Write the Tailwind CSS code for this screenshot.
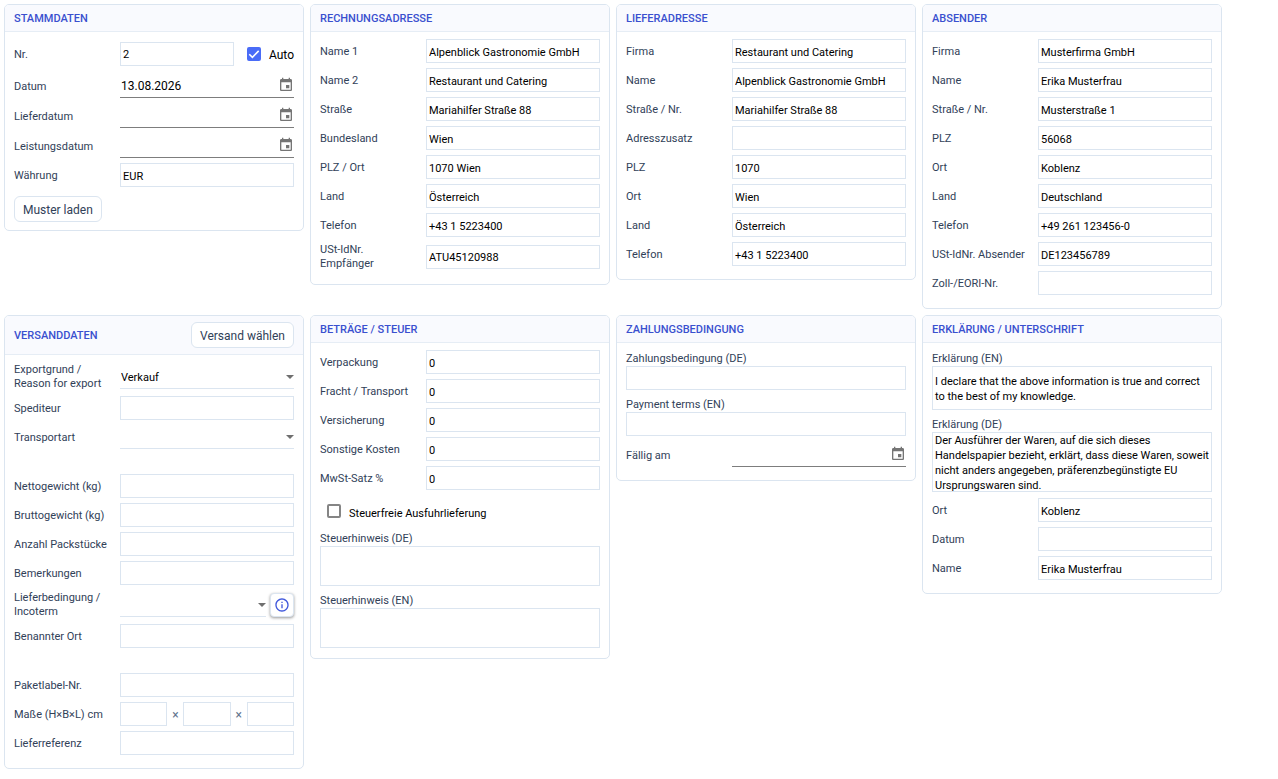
<!DOCTYPE html>
<html lang="de">
<head>
<meta charset="utf-8">
<meta name="viewport" content="width=device-width, initial-scale=1">
<title>Stammdaten</title>
<script src="https://cdn.jsdelivr.net/npm/@tailwindcss/browser@4"></script>
</head>
<body class="bg-white font-['Roboto','Noto_Sans',sans-serif] text-[11px] leading-[14px] text-slate-700">
<svg class="hidden" aria-hidden="true">
  <symbol id="event" viewBox="0 0 24 24"><path d="M17 12h-5v5h5v-5zM16 1v2H8V1H6v2H5c-1.11 0-1.99.9-1.99 2L3 19c0 1.1.89 2 2 2h14c1.1 0 2-.9 2-2V5c0-1.1-.9-2-2-2h-1V1h-2zm3 18H5V8h14v11z"/></symbol>
  <symbol id="arrow" viewBox="0 0 8 4"><path d="M0 0h8L4 4z"/></symbol>
</svg>
<main class="grid grid-cols-[repeat(auto-fill,300px)] items-start gap-[6px] p-1 [&_input]:pt-[2px] [&_label]:pt-[2px] [&_select]:pt-[3px]">

  <section class="rounded-[5px] border border-[#dbe5f0]">
    <h2 class="rounded-t-[4px] border-b border-[#e6edf5] bg-[#f9fafe] px-[9px] pt-[7px] pb-[5px] font-medium text-[#3a50cf]">STAMMDATEN</h2>
    <div class="px-[9px] pt-[7px] pb-2">
      <div class="mb-[5px] grid min-h-[29px] grid-cols-[98px_1fr] items-center gap-2">
        <label for="nr">Nr.</label>
        <div class="flex items-center gap-[13px]">
          <input id="nr" type="text" value="2" class="h-6 w-full min-w-0 flex-1 border border-[#dbe5f0] px-[2px] text-black">
          <div class="flex items-center gap-2">
            <span class="relative flex">
              <input id="auto" type="checkbox" checked class="peer size-[14px] appearance-none rounded-[2px] border-2 border-[#757575] checked:border-[#4a6cf7] checked:bg-[#4a6cf7]">
              <svg class="pointer-events-none absolute inset-0 hidden size-[14px] fill-none stroke-white stroke-[1.6] peer-checked:block" viewBox="0 0 14 14"><path d="M2.3 7.2l3.1 3.1 6.3-6.4"/></svg>
            </span>
            <label for="auto" class="text-[12px] text-black">Auto</label>
          </div>
        </div>
      </div>
      <div class="mb-[5px] grid min-h-[25px] grid-cols-[98px_1fr] items-center gap-2">
        <label for="datum">Datum</label>
        <div class="flex h-[25px] items-center border-b border-[#7d7d7d]">
          <input id="datum" type="text" value="13.08.2026" class="h-6 w-full min-w-0 flex-1 px-px text-[12px] text-black">
          <button type="button" aria-label="Datum auswählen"><svg class="size-4 fill-[#757575]"><use href="#event"/></svg></button>
        </div>
      </div>
      <div class="mb-[5px] grid min-h-[25px] grid-cols-[98px_1fr] items-center gap-2">
        <label for="lieferdatum">Lieferdatum</label>
        <div class="flex h-[25px] items-center border-b border-[#7d7d7d]">
          <input id="lieferdatum" type="text" class="h-6 w-full min-w-0 flex-1 px-px text-[12px] text-black">
          <button type="button" aria-label="Lieferdatum auswählen"><svg class="size-4 fill-[#757575]"><use href="#event"/></svg></button>
        </div>
      </div>
      <div class="mb-[5px] grid min-h-[25px] grid-cols-[98px_1fr] items-center gap-2">
        <label for="leistungsdatum">Leistungsdatum</label>
        <div class="flex h-[25px] items-center border-b border-[#7d7d7d]">
          <input id="leistungsdatum" type="text" class="h-6 w-full min-w-0 flex-1 px-px text-[12px] text-black">
          <button type="button" aria-label="Leistungsdatum auswählen"><svg class="size-4 fill-[#757575]"><use href="#event"/></svg></button>
        </div>
      </div>
      <div class="mb-[9px] grid min-h-6 grid-cols-[98px_1fr] items-center gap-2">
        <label for="waehrung">Währung</label>
        <input id="waehrung" type="text" value="EUR" class="h-6 w-full border border-[#dbe5f0] px-[2px] text-black">
      </div>
      <button type="button" class="block h-[26px] rounded-[6px] border border-[#dbe5f0] bg-white px-2 pt-[2px] text-[12px]">Muster laden</button>
    </div>
  </section>

  <section class="rounded-[5px] border border-[#dbe5f0]">
    <h2 class="rounded-t-[4px] border-b border-[#e6edf5] bg-[#f9fafe] px-[9px] pt-[7px] pb-[5px] font-medium text-[#3a50cf]">RECHNUNGSADRESSE</h2>
    <div class="px-[9px] pt-[7px] pb-2">
      <div class="mb-[5px] grid min-h-6 grid-cols-[98px_1fr] items-center gap-2"><label for="r1">Name 1</label><input id="r1" type="text" value="Alpenblick Gastronomie GmbH" class="h-6 w-full border border-[#dbe5f0] px-[2px] text-black"></div>
      <div class="mb-[5px] grid min-h-6 grid-cols-[98px_1fr] items-center gap-2"><label for="r2">Name 2</label><input id="r2" type="text" value="Restaurant und Catering" class="h-6 w-full border border-[#dbe5f0] px-[2px] text-black"></div>
      <div class="mb-[5px] grid min-h-6 grid-cols-[98px_1fr] items-center gap-2"><label for="r3">Straße</label><input id="r3" type="text" value="Mariahilfer Straße 88" class="h-6 w-full border border-[#dbe5f0] px-[2px] text-black"></div>
      <div class="mb-[5px] grid min-h-6 grid-cols-[98px_1fr] items-center gap-2"><label for="r4">Bundesland</label><input id="r4" type="text" value="Wien" class="h-6 w-full border border-[#dbe5f0] px-[2px] text-black"></div>
      <div class="mb-[5px] grid min-h-6 grid-cols-[98px_1fr] items-center gap-2"><label for="r5">PLZ / Ort</label><input id="r5" type="text" value="1070 Wien" class="h-6 w-full border border-[#dbe5f0] px-[2px] text-black"></div>
      <div class="mb-[5px] grid min-h-6 grid-cols-[98px_1fr] items-center gap-2"><label for="r6">Land</label><input id="r6" type="text" value="Österreich" class="h-6 w-full border border-[#dbe5f0] px-[2px] text-black"></div>
      <div class="mb-[5px] grid min-h-6 grid-cols-[98px_1fr] items-center gap-2"><label for="r7">Telefon</label><input id="r7" type="text" value="+43 1 5223400" class="h-6 w-full border border-[#dbe5f0] px-[2px] text-black"></div>
      <div class="mb-[5px] grid min-h-[29px] grid-cols-[98px_1fr] items-center gap-2"><label for="r8" class="pt-px!">USt-IdNr.<br>Empfänger</label><input id="r8" type="text" value="ATU45120988" class="h-6 w-full border border-[#dbe5f0] px-[2px] text-black"></div>
    </div>
  </section>

  <section class="rounded-[5px] border border-[#dbe5f0]">
    <h2 class="rounded-t-[4px] border-b border-[#e6edf5] bg-[#f9fafe] px-[9px] pt-[7px] pb-[5px] font-medium text-[#3a50cf]">LIEFERADRESSE</h2>
    <div class="px-[9px] pt-[7px] pb-2">
      <div class="mb-[5px] grid min-h-6 grid-cols-[98px_1fr] items-center gap-2"><label for="l1">Firma</label><input id="l1" type="text" value="Restaurant und Catering" class="h-6 w-full border border-[#dbe5f0] px-[2px] text-black"></div>
      <div class="mb-[5px] grid min-h-6 grid-cols-[98px_1fr] items-center gap-2"><label for="l2">Name</label><input id="l2" type="text" value="Alpenblick Gastronomie GmbH" class="h-6 w-full border border-[#dbe5f0] px-[2px] text-black"></div>
      <div class="mb-[5px] grid min-h-6 grid-cols-[98px_1fr] items-center gap-2"><label for="l3">Straße / Nr.</label><input id="l3" type="text" value="Mariahilfer Straße 88" class="h-6 w-full border border-[#dbe5f0] px-[2px] text-black"></div>
      <div class="mb-[5px] grid min-h-6 grid-cols-[98px_1fr] items-center gap-2"><label for="l4">Adresszusatz</label><input id="l4" type="text" class="h-6 w-full border border-[#dbe5f0] px-[2px] text-black"></div>
      <div class="mb-[5px] grid min-h-6 grid-cols-[98px_1fr] items-center gap-2"><label for="l5">PLZ</label><input id="l5" type="text" value="1070" class="h-6 w-full border border-[#dbe5f0] px-[2px] text-black"></div>
      <div class="mb-[5px] grid min-h-6 grid-cols-[98px_1fr] items-center gap-2"><label for="l6">Ort</label><input id="l6" type="text" value="Wien" class="h-6 w-full border border-[#dbe5f0] px-[2px] text-black"></div>
      <div class="mb-[5px] grid min-h-6 grid-cols-[98px_1fr] items-center gap-2"><label for="l7">Land</label><input id="l7" type="text" value="Österreich" class="h-6 w-full border border-[#dbe5f0] px-[2px] text-black"></div>
      <div class="mb-[5px] grid min-h-6 grid-cols-[98px_1fr] items-center gap-2"><label for="l8">Telefon</label><input id="l8" type="text" value="+43 1 5223400" class="h-6 w-full border border-[#dbe5f0] px-[2px] text-black"></div>
    </div>
  </section>

  <section class="rounded-[5px] border border-[#dbe5f0]">
    <h2 class="rounded-t-[4px] border-b border-[#e6edf5] bg-[#f9fafe] px-[9px] pt-[7px] pb-[5px] font-medium text-[#3a50cf]">ABSENDER</h2>
    <div class="px-[9px] pt-[7px] pb-2">
      <div class="mb-[5px] grid min-h-6 grid-cols-[98px_1fr] items-center gap-2"><label for="a1">Firma</label><input id="a1" type="text" value="Musterfirma GmbH" class="h-6 w-full border border-[#dbe5f0] px-[2px] text-black"></div>
      <div class="mb-[5px] grid min-h-6 grid-cols-[98px_1fr] items-center gap-2"><label for="a2">Name</label><input id="a2" type="text" value="Erika Musterfrau" class="h-6 w-full border border-[#dbe5f0] px-[2px] text-black"></div>
      <div class="mb-[5px] grid min-h-6 grid-cols-[98px_1fr] items-center gap-2"><label for="a3">Straße / Nr.</label><input id="a3" type="text" value="Musterstraße 1" class="h-6 w-full border border-[#dbe5f0] px-[2px] text-black"></div>
      <div class="mb-[5px] grid min-h-6 grid-cols-[98px_1fr] items-center gap-2"><label for="a4">PLZ</label><input id="a4" type="text" value="56068" class="h-6 w-full border border-[#dbe5f0] px-[2px] text-black"></div>
      <div class="mb-[5px] grid min-h-6 grid-cols-[98px_1fr] items-center gap-2"><label for="a5">Ort</label><input id="a5" type="text" value="Koblenz" class="h-6 w-full border border-[#dbe5f0] px-[2px] text-black"></div>
      <div class="mb-[5px] grid min-h-6 grid-cols-[98px_1fr] items-center gap-2"><label for="a6">Land</label><input id="a6" type="text" value="Deutschland" class="h-6 w-full border border-[#dbe5f0] px-[2px] text-black"></div>
      <div class="mb-[5px] grid min-h-6 grid-cols-[98px_1fr] items-center gap-2"><label for="a7">Telefon</label><input id="a7" type="text" value="+49 261 123456-0" class="h-6 w-full border border-[#dbe5f0] px-[2px] text-black"></div>
      <div class="mb-[5px] grid min-h-6 grid-cols-[98px_1fr] items-center gap-2"><label for="a8" class="whitespace-nowrap">USt-IdNr. Absender</label><input id="a8" type="text" value="DE123456789" class="h-6 w-full border border-[#dbe5f0] px-[2px] text-black"></div>
      <div class="mb-[5px] grid min-h-6 grid-cols-[98px_1fr] items-center gap-2"><label for="a9">Zoll-/EORI-Nr.</label><input id="a9" type="text" class="h-6 w-full border border-[#dbe5f0] px-[2px] text-black"></div>
    </div>
  </section>

  <section class="rounded-[5px] border border-[#dbe5f0]">
    <div class="flex items-center justify-between rounded-t-[4px] border-b border-[#e6edf5] bg-[#f9fafe] px-[9px] py-[6px]">
      <h2 class="pt-[2px] font-medium text-[#3a50cf]">VERSANDDATEN</h2>
      <button type="button" class="h-[26px] rounded-[6px] border border-[#dbe5f0] bg-white px-2 pt-[2px] text-[12px]">Versand wählen</button>
    </div>
    <div class="px-[9px] pt-[7px] pb-2">
      <div class="mb-[5px] grid min-h-[29px] grid-cols-[98px_1fr] items-center gap-2">
        <label for="v1" class="pt-px!">Exportgrund /<br>Reason for export</label>
        <div class="relative">
          <select id="v1" class="block h-6 w-full appearance-none border-b border-[#dbe5f0] px-px text-black"><option>Verkauf</option></select>
          <svg class="pointer-events-none absolute top-[10px] right-0 h-1 w-2 fill-[#6f6f6f]"><use href="#arrow"/></svg>
        </div>
      </div>
      <div class="mb-[5px] grid min-h-6 grid-cols-[98px_1fr] items-center gap-2"><label for="v2">Spediteur</label><input id="v2" type="text" class="h-6 w-full border border-[#dbe5f0] px-[2px] text-black"></div>
      <div class="mb-[25px] grid min-h-6 grid-cols-[98px_1fr] items-center gap-2">
        <label for="v3">Transportart</label>
        <div class="relative">
          <select id="v3" class="block h-6 w-full appearance-none border-b border-[#dbe5f0] px-px text-black"><option></option></select>
          <svg class="pointer-events-none absolute top-[10px] right-0 h-1 w-2 fill-[#6f6f6f]"><use href="#arrow"/></svg>
        </div>
      </div>
      <div class="mb-[5px] grid min-h-6 grid-cols-[98px_1fr] items-center gap-2"><label for="v4">Nettogewicht (kg)</label><input id="v4" type="text" class="h-6 w-full border border-[#dbe5f0] px-[2px] text-black"></div>
      <div class="mb-[5px] grid min-h-6 grid-cols-[98px_1fr] items-center gap-2"><label for="v5">Bruttogewicht (kg)</label><input id="v5" type="text" class="h-6 w-full border border-[#dbe5f0] px-[2px] text-black"></div>
      <div class="mb-[5px] grid min-h-6 grid-cols-[98px_1fr] items-center gap-2"><label for="v6">Anzahl Packstücke</label><input id="v6" type="text" class="h-6 w-full border border-[#dbe5f0] px-[2px] text-black"></div>
      <div class="mb-[5px] grid min-h-6 grid-cols-[98px_1fr] items-center gap-2"><label for="v7">Bemerkungen</label><input id="v7" type="text" class="h-6 w-full border border-[#dbe5f0] px-[2px] text-black"></div>
      <div class="mb-[5px] grid min-h-[29px] grid-cols-[98px_1fr] items-center gap-2">
        <label for="v8" class="pt-px!">Lieferbedingung /<br>Incoterm</label>
        <div class="flex items-center gap-1">
          <div class="relative flex-1">
            <select id="v8" class="block h-6 w-full appearance-none border-b border-[#dbe5f0] px-px text-black"><option></option></select>
            <svg class="pointer-events-none absolute top-[10px] right-0 h-1 w-2 fill-[#6f6f6f]"><use href="#arrow"/></svg>
          </div>
          <button type="button" aria-label="Info Incoterms" class="flex size-6 items-center justify-center rounded-[4px] border border-[#dbe5f0] bg-white shadow-[0_1px_3px_rgba(0,0,0,0.4)]">
            <svg class="size-4 shrink-0 fill-[#4058dc]" viewBox="0 0 24 24"><path d="M11 7h2v2h-2zm0 4h2v6h-2zm1-9C6.480 2 2 6.480 2 12s4.480 10 10 10 10-4.480 10-10S17.520 2 12 2zm0 18c-4.410 0-8-3.590-8-8s3.590-8 8-8 8 3.590 8 8-3.590 8-8 8z"/></svg>
          </button>
        </div>
      </div>
      <div class="mb-[25px] grid min-h-6 grid-cols-[98px_1fr] items-center gap-2"><label for="v9">Benannter Ort</label><input id="v9" type="text" class="h-6 w-full border border-[#dbe5f0] px-[2px] text-black"></div>
      <div class="mb-[5px] grid min-h-6 grid-cols-[98px_1fr] items-center gap-2"><label for="v10">Paketlabel-Nr.</label><input id="v10" type="text" class="h-6 w-full border border-[#dbe5f0] px-[2px] text-black"></div>
      <div class="mb-[5px] grid min-h-6 grid-cols-[98px_1fr] items-center gap-2">
        <label for="v11">Maße (H×B×L) cm</label>
        <div class="grid grid-cols-[1fr_16px_1fr_16px_1fr] items-center text-center text-[12px] text-slate-500">
          <input id="v11" type="text" aria-label="Höhe" class="h-6 w-full border border-[#dbe5f0] px-[2px] text-black">
          <span class="pt-[2px]">×</span>
          <input type="text" aria-label="Breite" class="h-6 w-full border border-[#dbe5f0] px-[2px] text-black">
          <span class="pt-[2px]">×</span>
          <input type="text" aria-label="Länge" class="h-6 w-full border border-[#dbe5f0] px-[2px] text-black">
        </div>
      </div>
      <div class="mb-[5px] grid min-h-6 grid-cols-[98px_1fr] items-center gap-2"><label for="v12">Lieferreferenz</label><input id="v12" type="text" class="h-6 w-full border border-[#dbe5f0] px-[2px] text-black"></div>
    </div>
  </section>

  <section class="rounded-[5px] border border-[#dbe5f0]">
    <h2 class="rounded-t-[4px] border-b border-[#e6edf5] bg-[#f9fafe] px-[9px] pt-[7px] pb-[5px] font-medium text-[#3a50cf]">BETRÄGE / STEUER</h2>
    <div class="px-[9px] pt-[7px] pb-1">
      <div class="mb-[5px] grid min-h-6 grid-cols-[98px_1fr] items-center gap-2"><label for="b1">Verpackung</label><input id="b1" type="text" value="0" class="h-6 w-full border border-[#dbe5f0] px-[2px] text-black"></div>
      <div class="mb-[5px] grid min-h-6 grid-cols-[98px_1fr] items-center gap-2"><label for="b2">Fracht / Transport</label><input id="b2" type="text" value="0" class="h-6 w-full border border-[#dbe5f0] px-[2px] text-black"></div>
      <div class="mb-[5px] grid min-h-6 grid-cols-[98px_1fr] items-center gap-2"><label for="b3">Versicherung</label><input id="b3" type="text" value="0" class="h-6 w-full border border-[#dbe5f0] px-[2px] text-black"></div>
      <div class="mb-[5px] grid min-h-6 grid-cols-[98px_1fr] items-center gap-2"><label for="b4">Sonstige Kosten</label><input id="b4" type="text" value="0" class="h-6 w-full border border-[#dbe5f0] px-[2px] text-black"></div>
      <div class="mb-[5px] grid min-h-6 grid-cols-[98px_1fr] items-center gap-2"><label for="b5">MwSt-Satz %</label><input id="b5" type="text" value="0" class="h-6 w-full border border-[#dbe5f0] px-[2px] text-black"></div>
      <div class="mb-[3px] flex h-8 items-center gap-2 pl-[7px]">
        <input id="b6" type="checkbox" class="size-[14px] appearance-none rounded-[2px] border-2 border-[#858585] checked:border-[#4a6cf7] checked:bg-[#4a6cf7]">
        <label for="b6" class="pt-[5px]! text-black">Steuerfreie Ausfuhrlieferung</label>
      </div>
      <div class="mb-[6px] flex flex-col"><label for="b7">Steuerhinweis (DE)</label><textarea id="b7" class="block h-10 w-full resize-none border border-[#dbe5f0] px-[2px] text-black"></textarea></div>
      <div class="mb-[6px] flex flex-col"><label for="b8">Steuerhinweis (EN)</label><textarea id="b8" class="block h-10 w-full resize-none border border-[#dbe5f0] px-[2px] text-black"></textarea></div>
    </div>
  </section>

  <section class="rounded-[5px] border border-[#dbe5f0]">
    <h2 class="rounded-t-[4px] border-b border-[#e6edf5] bg-[#f9fafe] px-[9px] pt-[7px] pb-[5px] font-medium text-[#3a50cf]">ZAHLUNGSBEDINGUNG</h2>
    <div class="px-[9px] pt-[7px] pb-2">
      <div class="mb-[6px] flex flex-col"><label for="z1">Zahlungsbedingung (DE)</label><input id="z1" type="text" class="h-6 w-full border border-[#dbe5f0] px-[2px] text-black"></div>
      <div class="mb-[6px] flex flex-col"><label for="z2">Payment terms (EN)</label><input id="z2" type="text" class="h-6 w-full border border-[#dbe5f0] px-[2px] text-black"></div>
      <div class="mb-[5px] grid min-h-[25px] grid-cols-[98px_1fr] items-center gap-2">
        <label for="z3">Fällig am</label>
        <div class="flex h-[25px] items-center border-b border-[#7d7d7d]">
          <input id="z3" type="text" class="h-6 w-full min-w-0 flex-1 px-px text-[12px] text-black">
          <button type="button" aria-label="Fälligkeit auswählen"><svg class="size-4 fill-[#757575]"><use href="#event"/></svg></button>
        </div>
      </div>
    </div>
  </section>

  <section class="rounded-[5px] border border-[#dbe5f0]">
    <h2 class="rounded-t-[4px] border-b border-[#e6edf5] bg-[#f9fafe] px-[9px] pt-[7px] pb-[5px] font-medium text-[#3a50cf]">ERKLÄRUNG / UNTERSCHRIFT</h2>
    <div class="px-[9px] pt-[7px] pb-2">
      <div class="mb-[6px] flex flex-col"><label for="e1">Erklärung (EN)</label><textarea id="e1" class="block h-11 w-full resize-none overflow-hidden border border-[#dbe5f0] px-[2px] pt-[7px] pb-[5px] leading-[15px] text-black">I declare that the above information is true and correct to the best of my knowledge.</textarea></div>
      <div class="mb-[6px] flex flex-col"><label for="e2">Erklärung (DE)</label><textarea id="e2" class="block h-15 w-full resize-none overflow-hidden border border-[#dbe5f0] px-[2px] leading-[15px] text-black">Der Ausführer der Waren, auf die sich dieses Handelspapier bezieht, erklärt, dass diese Waren, soweit nicht anders angegeben, präferenzbegünstigte EU Ursprungswaren sind.</textarea></div>
      <div class="mb-[5px] grid min-h-6 grid-cols-[98px_1fr] items-center gap-2"><label for="e3">Ort</label><input id="e3" type="text" value="Koblenz" class="h-6 w-full border border-[#dbe5f0] px-[2px] text-black"></div>
      <div class="mb-[5px] grid min-h-6 grid-cols-[98px_1fr] items-center gap-2"><label for="e4">Datum</label><input id="e4" type="text" class="h-6 w-full border border-[#dbe5f0] px-[2px] text-black"></div>
      <div class="mb-[5px] grid min-h-6 grid-cols-[98px_1fr] items-center gap-2"><label for="e5">Name</label><input id="e5" type="text" value="Erika Musterfrau" class="h-6 w-full border border-[#dbe5f0] px-[2px] text-black"></div>
    </div>
  </section>
</main>
</body>
</html>
